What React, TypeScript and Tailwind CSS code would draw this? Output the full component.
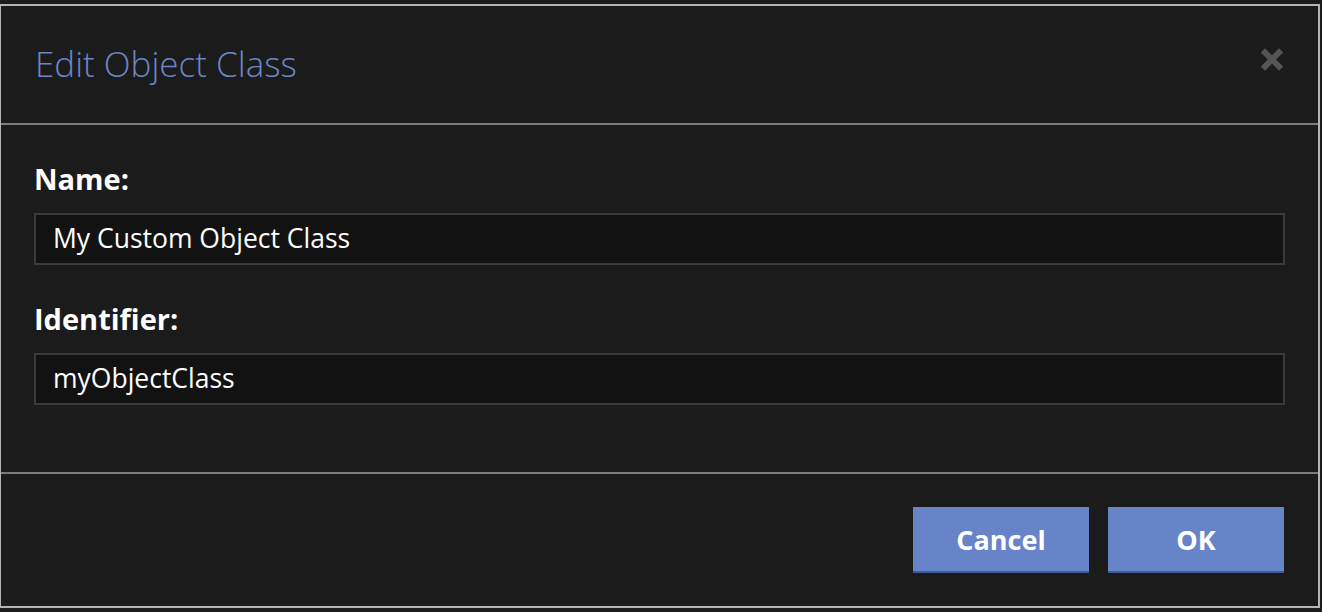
import React from 'react';

const font = { fontFamily: '"Open Sans", "Noto Sans", sans-serif' };

const Field = ({ label, value }: { label: string; value: string }) => (
  <div className="flex flex-col">
    <label className="text-[29px] font-bold leading-[40px] text-white">{label}</label>
    <div className="mt-[14px] flex h-[52px] w-full items-center border-2 border-[#3a3a3a] bg-[#121212] px-[17px] text-[26.5px] text-white">
      {value}
    </div>
  </div>
);

const App = () => {
  return (
    <div className="h-[612px] w-[1322px] overflow-hidden bg-[#1b1b1b] pt-[4px]" style={font}>
      <div className="ml-[-1px] flex h-[604px] w-[1321px] flex-col border-2 border-[#b4b4b4] bg-[#1b1b1b]">
        {/* header */}
        <div className="flex h-[119px] shrink-0 items-center justify-between border-b-2 border-[#7c7c7c] pl-[34px] pr-[35px]">
          <h1 className="text-[35px] font-light text-[#6a86c6]">Edit Object Class</h1>
          <button className="mb-[11px] text-[#555]">
            <svg width="22" height="23" viewBox="0 0 22 23">
              <path d="M4 4.5 L18 18.5 M18 4.5 L4 18.5" stroke="currentColor" strokeWidth="6" strokeLinecap="square" />
            </svg>
          </button>
        </div>

        {/* body */}
        <div className="flex flex-col gap-[34px] border-b-2 border-[#7c7c7c] px-[33px] pb-[67px] pt-[34px]">
          <Field label="Name:" value="My Custom Object Class" />
          <Field label="Identifier:" value="myObjectClass" />
        </div>

        {/* footer */}
        <div className="flex flex-1 items-start justify-end gap-[19px] pr-[34px] pt-[33px]">
          <button className="h-[66px] w-[176px] border-b-2 border-[#3f5a9b] bg-[#6884c8] pt-[2px] text-[27px] font-bold text-white">
            Cancel
          </button>
          <button className="h-[66px] w-[176px] border-b-2 border-[#3f5a9b] bg-[#6884c8] pt-[2px] text-[27px] font-bold text-white">
            OK
          </button>
        </div>
      </div>
    </div>
  );
};

export default App;
